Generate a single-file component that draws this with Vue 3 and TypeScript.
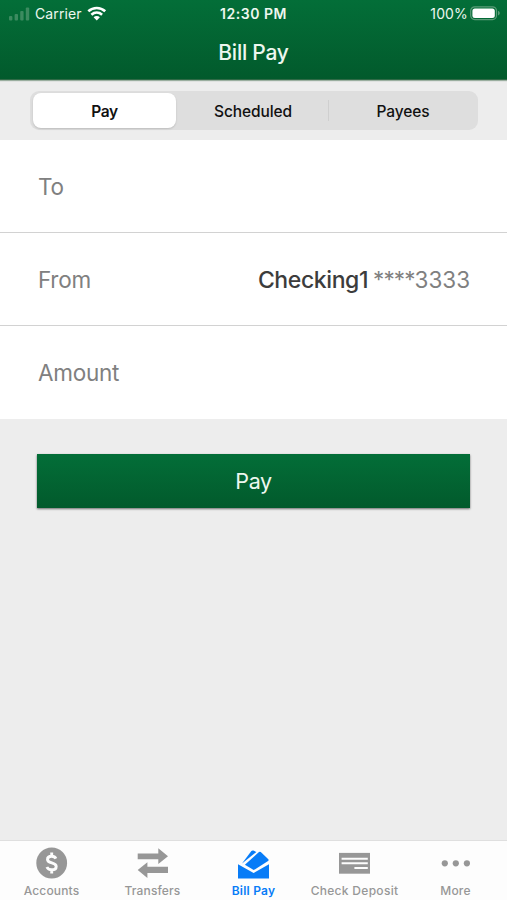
<script setup lang="ts">
import { ref } from 'vue'

type Tab = { id: string; label: string }

const segments: string[] = ['Pay', 'Scheduled', 'Payees']
const activeSegment = ref('Pay')

const tabs: Tab[] = [
  { id: 'accounts', label: 'Accounts' },
  { id: 'transfers', label: 'Transfers' },
  { id: 'billpay', label: 'Bill Pay' },
  { id: 'deposit', label: 'Check Deposit' },
  { id: 'more', label: 'More' },
]
const activeTab = ref('billpay')
</script>

<template>
  <div class="screen">
    <header class="header">
      <div class="status">
        <div class="status-side">
          <svg class="signal" width="21" height="14" viewBox="0 0 21 14">
            <rect x="0" y="9" width="3.4" height="4.5" rx="1" />
            <rect x="5.6" y="7" width="3.4" height="6.5" rx="1" />
            <rect x="11.2" y="4" width="3.4" height="9.5" rx="1" />
            <rect x="16.8" y="0.5" width="3.4" height="13" rx="1" />
          </svg>
          <span class="carrier">Carrier</span>
          <svg class="wifi" width="20" height="15" viewBox="0 0 20 15">
            <path d="M1.3 5.3C6.2.9 13.3.9 18.2 5.3" />
            <path d="M4.4 8.7c3.2-2.8 7.5-2.8 10.7 0" />
            <path class="wifi-dot" d="M6.6 11.2c1.8-1.6 4.5-1.6 6.3 0l-3.15 3.2z" />
          </svg>
        </div>
        <span class="clock">12:30 PM</span>
        <div class="status-side right">
          <span class="percent">100%</span>
          <svg class="battery" width="31" height="15" viewBox="0 0 31 15">
            <rect class="shell" x="0.7" y="0.8" width="25.8" height="12.8" rx="4" />
            <rect class="charge" x="2.4" y="2.4" width="22.4" height="9.6" rx="2.5" />
            <path class="cap" d="M28 4.8c2.4.9 2.4 3.9 0 4.8z" />
          </svg>
        </div>
      </div>
      <h1 class="title">Bill Pay</h1>
    </header>

    <div class="segment-bar">
      <div class="segmented">
        <button
          v-for="name in segments"
          :key="name"
          class="segment"
          :class="{ active: activeSegment === name }"
          @click="activeSegment = name"
        ><span>{{ name }}</span></button>
      </div>
    </div>

    <main class="form">
      <div class="row"><span>To</span></div>
      <div class="row">
        <span>From</span>
        <span class="account"><span class="account-name">Checking1</span><span class="stars">****</span><span class="digits">3333</span></span>
      </div>
      <div class="row"><span>Amount</span></div>
    </main>

    <div class="action"><button class="pay">Pay</button></div>

    <nav class="tabs">
      <button
        v-for="tab in tabs"
        :key="tab.id"
        class="tab"
        :class="[tab.id, { active: activeTab === tab.id }]"
        @click="activeTab = tab.id"
      >
        <svg v-if="tab.id === 'accounts'" class="icon" width="32" height="32" viewBox="0 0 32 32">
          <circle cx="15.7" cy="16" r="15.4" />
          <path class="cut-line" d="M19.9 11.6C19.1 9.9 17.6 9.2 15.7 9.2c-2.5 0-4.2 1.2-4.2 3.2 0 4.5 8.7 2.4 8.7 7 0 2.1-1.8 3.4-4.5 3.4-2.3 0-4-.9-4.8-2.8M15.7 5.6v3.6M15.7 22.8v3.8" />
        </svg>
        <svg v-else-if="tab.id === 'transfers'" class="icon" width="32" height="32" viewBox="0 0 32 32">
          <path d="M.7 6.4h20.6V1.3L31 9.2l-9.7 7.7v-4.7H.7zM31 19.8H10.4v-4.6L.7 23l9.7 7.9v-5H31z" />
        </svg>
        <svg v-else-if="tab.id === 'billpay'" class="icon" width="32" height="32" viewBox="0 0 32 32">
          <path d="M0 17.2 15.6 26 31 17.2v14.4H0z" />
          <path d="M6.9 17.7 21 5Q21.9 4.300 22.800 5.100L30.300 12.200Q31.100 13.200 30.100 14.100L15.700 23.100z" />
          <path d="M4 16.400 13.400 4.100Q14.300 3.100 15.400 3.600L18.400 5Z" />
        </svg>
        <svg v-else-if="tab.id === 'deposit'" class="icon" width="32" height="32" viewBox="0 0 32 32">
          <rect x="0" y="5.9" width="31" height="20.8" />
          <path class="cut-line" d="M2.600 11.800h26.200M2.600 16.300h26.200M15.400 20.900h13.400" />
        </svg>
        <svg v-else class="icon" width="32" height="32" viewBox="0 0 32 32">
          <circle cx="4.8" cy="16.3" r="3.1" />
          <circle cx="15.8" cy="16.3" r="3.1" />
          <circle cx="26.9" cy="16.3" r="3.1" />
        </svg>
        <span class="tab-label">{{ tab.label }}</span>
      </button>
    </nav>
  </div>
</template>

<style>
body {
  background: #ededed;
}
</style>

<style scoped>
.screen {
  display: flex;
  flex-direction: column;
  width: 507px;
  height: 900px;
  overflow: hidden;
  background: #ededed;
  font-family: Inter, "Liberation Sans", sans-serif;
}
button {
  margin: 0;
  padding: 0;
  border: 0;
  background: none;
  font: inherit;
}
.header {
  flex: none;
  z-index: 1;
  height: 79px;
  color: #edf7ef;
  background: linear-gradient(#036e38, #025a2c);
  border-bottom: 1px solid #2f6a46;
  box-shadow: 0 1px 1px #9aae9f;
  box-sizing: content-box;
}
.status {
  display: grid;
  grid-template-columns: 1fr auto 1fr;
  align-items: center;
  height: 27px;
  padding: 0 7px 0 9px;
  font-size: 14px;
}
.status-side {
  display: flex;
  align-items: center;
}
.right {
  justify-content: flex-end;
}
.signal {
  margin-right: 5px;
  fill: #3c8b60;
}
.carrier {
  letter-spacing: 0.1px;
}
.wifi {
  margin-left: 5px;
  fill: none;
  stroke: #fff;
  stroke-width: 2.6;
}
.wifi-dot {
  fill: #fff;
  stroke: none;
}
.clock {
  margin-right: 2px;
  font-weight: 600;
  letter-spacing: 0.55px;
}
.percent {
  letter-spacing: 0.15px;
}
.battery {
  margin-left: 2px;
  margin-right: -1px;
}
.shell {
  fill: none;
  stroke: #5b9c78;
  stroke-width: 1.2;
}
.charge {
  fill: #fff;
}
.cap {
  fill: #5b9c78;
}
.title {
  margin: 0;
  font-size: 21px;
  font-weight: 500;
  line-height: 51px;
  letter-spacing: -0.25px;
  text-align: center;
}
.segment-bar {
  flex: none;
  display: flex;
  justify-content: center;
  height: 60px;
  padding-top: 11px;
  box-sizing: border-box;
}
.segmented {
  display: grid;
  grid-template-columns: 143px 1fr 150px;
  width: 448px;
  height: 39px;
  margin-left: 1px;
  padding: 2px 0 2px 3px;
  box-sizing: border-box;
  border-radius: 9px;
  background: #dedede;
}
.segment {
  display: grid;
  place-items: center;
  padding-top: 1px;
  font-size: 15.5px;
  font-weight: 500;
  letter-spacing: -0.12px;
  color: #111;
}
.segment:nth-child(2) {
  padding-left: 2px;
}
.segment.active {
  font-weight: 600;
  letter-spacing: -0.35px;
  border-radius: 8px;
  background: #fff;
  box-shadow: 0 1px 2px rgba(0, 0, 0, 0.15);
}
.segment:last-child {
  background: linear-gradient(#cfcfcf, #cfcfcf) 0 50% / 1px 21px no-repeat;
}
.form {
  flex: none;
  background: #fff;
}
.row {
  display: flex;
  align-items: center;
  justify-content: space-between;
  height: 93px;
  padding: 1px 37px 0 38px;
  box-sizing: border-box;
  border-bottom: 1px solid #d2d2d2;
  font-size: 22.5px;
  letter-spacing: -0.25px;
  color: #808080;
}
.row:last-child {
  border-bottom-color: #fff;
}
.account {
  display: flex;
}
.account-name {
  margin-right: 5px;
  font-size: 23px;
  font-weight: 500;
  letter-spacing: -0.4px;
  color: #3c3c3c;
}
.stars {
  letter-spacing: -0.9px;
}
.digits {
  letter-spacing: -0.05px;
}
.action {
  flex: none;
  padding: 35px 37px 0;
}
.pay {
  display: block;
  width: 433px;
  height: 54px;
  font-size: 21.5px;
  letter-spacing: -0.4px;
  color: #edf7ef;
  background: linear-gradient(#036e38, #025a2c);
  box-shadow: 0 1px 2px rgba(0, 0, 0, 0.55);
}
.tabs {
  display: grid;
  grid-template-columns: repeat(5, 101px);
  height: 60px;
  margin-top: auto;
  padding-left: 1px;
  border-top: 1px solid #dfdfdf;
  box-sizing: border-box;
  background: #fdfdfd;
}
.tab {
  display: flex;
  flex-direction: column;
  align-items: center;
  padding-top: 6px;
  color: #979797;
}
.tab.active {
  color: #087cf7;
}
.icon {
  fill: currentColor;
}
.cut-line {
  fill: none;
  stroke: #fdfdfd;
  stroke-width: 2;
}
.accounts .cut-line {
  stroke-width: 2.9;
}
.tab-label {
  margin-top: 4px;
  font-size: 12px;
  font-weight: 500;
  line-height: 16px;
  letter-spacing: 0.15px;
  white-space: nowrap;
}
.deposit .tab-label {
  letter-spacing: 0.3px;
}
.active .tab-label {
  font-weight: 600;
  letter-spacing: 0.25px;
}
</style>
